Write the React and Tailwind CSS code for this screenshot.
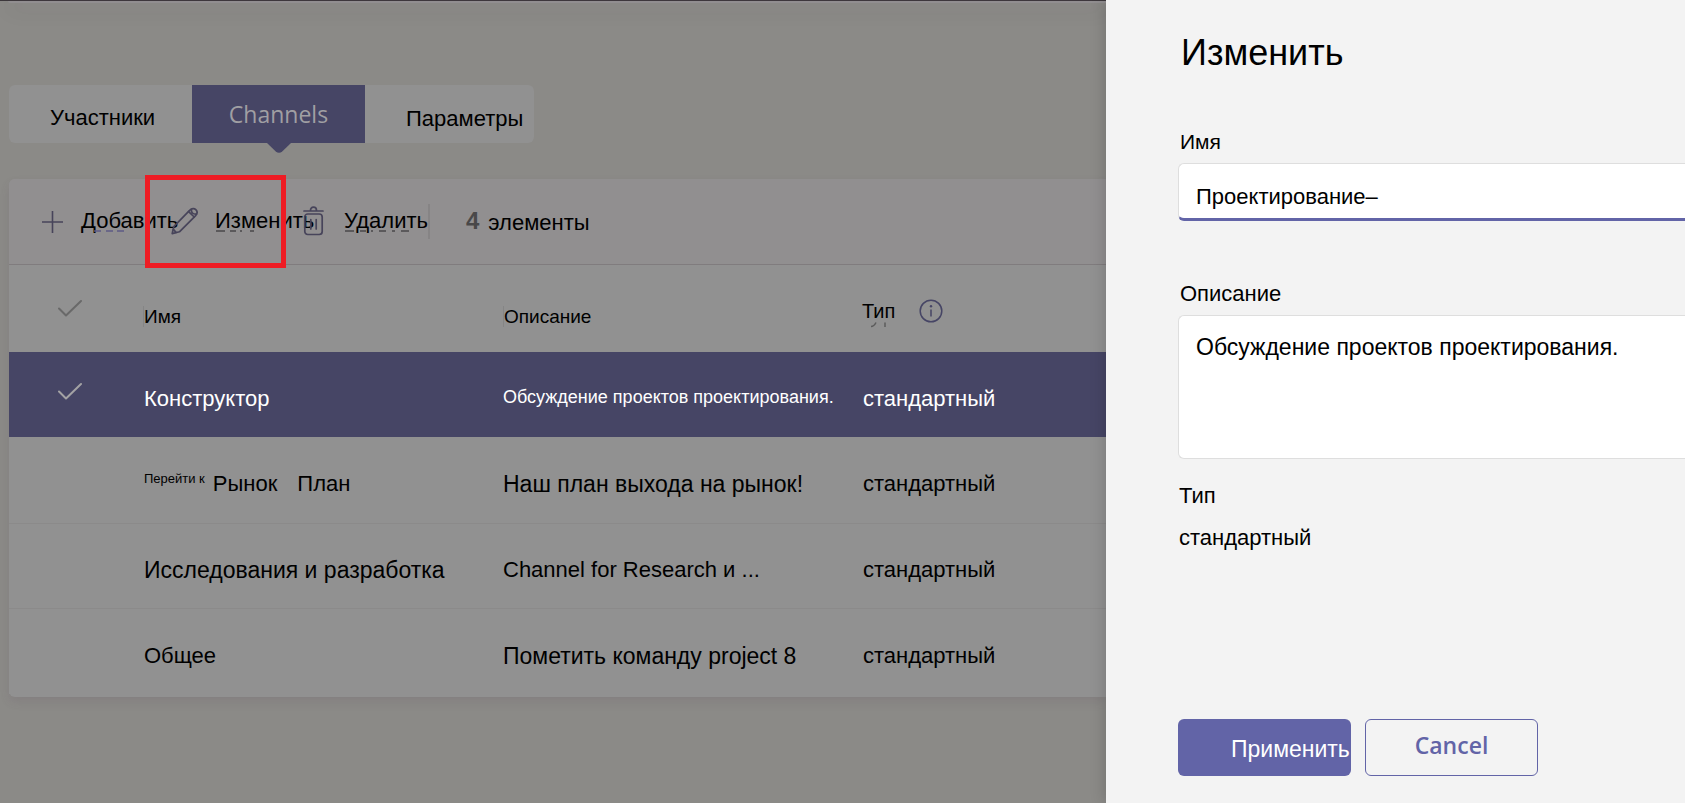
import React, { useState } from "react";

const channels = [
  {
    id: "design",
    name: "Конструктор",
    description: "Обсуждение проектов проектирования.",
    type: "стандартный",
    rowClass: "h-[85px] bg-[#464565] text-white",
    nameClass: "text-[22px]",
    descriptionClass: "pt-1 text-[18px]",
  },
  {
    id: "market",
    prefix: "Перейти к",
    name: "Рынок",
    suffix: "План",
    description: "Наш план выхода на рынок!",
    type: "стандартный",
    rowClass: "h-[87px]",
    nameClass: "text-[22px]",
    descriptionClass: "pt-2 text-[23px]",
  },
  {
    id: "research",
    name: "Исследования и разработка",
    description: "Channel for Research и ...",
    type: "стандартный",
    rowClass: "h-[85px]",
    nameClass: "text-[23px]",
    descriptionClass: "pt-2 text-[22px]",
  },
  {
    id: "general",
    name: "Общее",
    description: "Пометить команду project 8",
    type: "стандартный",
    rowClass: "h-[85px]",
    nameClass: "text-[22px]",
    descriptionClass: "pt-2 text-[23px]",
  },
];

const PlusIcon = () => (
  <svg width="22" height="24" viewBox="0 0 22 24" fill="none" stroke="#47445a" strokeWidth="1.6">
    <path d="M0 13H21M10.5 2V24" />
  </svg>
);

const PencilIcon = () => (
  <svg width="27" height="28" viewBox="0 0 27 28" fill="none" stroke="#47445a" strokeWidth="1.7" strokeLinejoin="round" strokeLinecap="round">
    <path d="M1.2 26.6L2.8 19.6L18.6 3.4C20.6 1.2 23.2 1 24.8 2.6C26.4 4.2 26.3 6.8 24.4 8.8L8.4 24.8Z" />
    <path d="M17.6 4.6L23.2 10M20.4 2.2C20 5.4 21.8 7.4 25.4 7.2M2.4 22.4L5 25.4" />
  </svg>
);

const TrashIcon = () => (
  <svg width="21" height="30" viewBox="0 0 21 30" fill="none" stroke="#47445a" strokeWidth="1.7" strokeLinecap="round">
    <path d="M1 5H20M7.5 4.5C7.5 2.4 8.6 1.2 10.5 1.2S13.5 2.4 13.5 4.5" />
    <rect x="1.8" y="8" width="17.4" height="20.5" rx="3" />
    <path d="M7.8 13.5V23M13.2 13.5V23" />
  </svg>
);

const CheckIcon = ({ color }) => (
  <svg width="25" height="18" viewBox="0 0 25 18" fill="none" stroke={color} strokeWidth="2" strokeLinecap="round" strokeLinejoin="round">
    <path d="M1 9.5L8 16.5L23 2" />
  </svg>
);

const InfoIcon = () => (
  <svg width="24" height="24" viewBox="0 0 24 24" fill="none" stroke="#464565" strokeWidth="1.5">
    <circle cx="12" cy="12" r="10.8" />
    <path d="M12 10.5V17.5" />
    <circle cx="12" cy="7.2" r="1.2" fill="#464565" stroke="none" />
  </svg>
);

const Tabs = () => (
  <nav className="ml-[9px] flex h-[58px] w-[525px] rounded-md bg-[#919191] text-[22px] text-black">
    <button type="button" className="w-[183px] pt-[6px] pl-[41px] text-left">
      Участники
    </button>
    <button
      type="button"
      className="relative w-[173px] bg-[#464565] text-center font-['Open_Sans',sans-serif] text-[23px] text-[#a09fa3]"
    >
      Channels
      <svg className="absolute top-full left-[75px]" width="24" height="10" viewBox="0 0 24 10" fill="#464565">
        <path d="M0 0H24L15.2 8.4C13.2 10.2 10.8 10.2 8.8 8.4Z" />
      </svg>
    </button>
    <button type="button" className="flex-1 pt-2 pl-[41px] text-left">
      Параметры
    </button>
  </nav>
);

const Toolbar = () => (
  <div className="relative flex h-[86px] items-center rounded-tl-md border-b border-[#807c7e] bg-[#918f90] pl-[33px] text-[22px] whitespace-nowrap">
    <button type="button" className="relative flex w-[129px] shrink-0 items-center pb-0.5 text-left">
      <span className="w-[39px] shrink-0">
        <PlusIcon />
      </span>
      Добавить
      <svg className="absolute bottom-[6px] left-[52px]" width="32" height="3" stroke="#5d5b85" strokeWidth="1.5">
        <path d="M0 1H7M12 1H19M23 1H30" />
      </svg>
    </button>
    <button type="button" className="relative flex w-[132px] shrink-0 items-center pb-0.5 text-left">
      <span className="w-11 shrink-0">
        <PencilIcon />
      </span>
      Изменить
      <svg className="absolute bottom-[6px] left-[45px]" width="40" height="3" stroke="#4a484a" strokeWidth="1.5">
        <path d="M0 1H9M14 1H20M24 1H26M34 1H38" />
      </svg>
    </button>
    <button type="button" className="relative flex shrink-0 items-center border-r-2 border-[#868485] pb-0.5 text-left">
      <span className="w-[41px] shrink-0">
        <TrashIcon />
      </span>
      Удалить
      <svg className="absolute bottom-[6px] left-[42px]" width="72" height="3" stroke="#4a484a" strokeWidth="1.5">
        <path d="M0 1H9M15 1H21M26 1H28M34 1H41M47 1H50M56 1H64" />
      </svg>
    </button>
    <p className="flex items-center gap-[9px] pl-9">
      <b className="pb-0.5 text-2xl leading-7 text-[#494849]">4</b>
      <span className="pt-0.5">элементы</span>
    </p>
    <div className="pointer-events-none absolute -top-1 left-[136px] z-10 h-[93px] w-[141px] border-[5px] border-[#ee1c24]" />
  </div>
);

const ChannelsTable = () => (
  <table className="w-full table-fixed border-separate border-spacing-0 bg-[#919191] text-left whitespace-nowrap">
    <colgroup>
      <col className="w-[134px]" />
      <col className="w-[360px]" />
      <col className="w-[359px]" />
      <col />
    </colgroup>
    <thead>
      <tr className="h-[87px] text-[19px]">
        <td className="pb-0.5 pl-[49px]">
          <CheckIcon color="#696969" />
        </td>
        <th className="pt-[18px] font-normal">
          <span className="border-l border-[#858585] leading-5">Имя</span>
        </th>
        <th className="pt-[18px] font-normal">
          <span className="border-l border-[#858585] leading-5">Описание</span>
        </th>
        <th className="font-normal">
          <div className="flex items-center gap-6 pt-1">
            <span className="relative text-[20px]">
              Тип
              <svg className="absolute -bottom-0.5 left-[9px]" width="16" height="6" fill="none" stroke="#5c5c5c" strokeWidth="1.5">
                <path d="M0 4.5C2.5 4.5 3.5 3.5 5 0.5M14 0.5V5" />
              </svg>
            </span>
            <InfoIcon />
          </div>
        </th>
      </tr>
    </thead>
    <tbody>
      {channels.map((channel, index) => (
        <tr
          key={channel.id}
          className={`${channel.rowClass} ${
            index === 0 ? "" : "[&>td]:border-b [&>td]:border-[#8b8a8a] last:[&>td]:border-b-0"
          }`}
        >
          <td className="pb-2 pl-[49px]">{index === 0 && <CheckIcon color="#a3a2a4" />}</td>
          <td className="pt-2 pl-px">
            <div className={`flex items-start leading-7 ${channel.nameClass}`}>
              {channel.prefix && <span className="mr-2 text-[13px] leading-[18px]">{channel.prefix}</span>}
              <span>{channel.name}</span>
              {channel.suffix && <span className="ml-5">{channel.suffix}</span>}
            </div>
          </td>
          <td className={`leading-7 ${channel.descriptionClass}`}>{channel.description}</td>
          <td className="pt-2 pl-px text-[22px] leading-7">{channel.type}</td>
        </tr>
      ))}
    </tbody>
  </table>
);

const EditPanel = () => {
  const [name, setName] = useState("Проектирование–");
  const [description, setDescription] = useState("Обсуждение проектов проектирования.");

  return (
    <aside className="relative z-20 w-[579px] shrink-0 bg-[#f3f3f3] pt-[33px] pl-[72px] text-[22px] leading-7 shadow-[-1px_0_14px_rgba(0,0,0,0.18)] [clip-path:inset(0_0_0_-24px)]">
      <h2 className="pl-[3px] text-4xl">Изменить</h2>

      <form className="flex flex-col" onSubmit={(e) => e.preventDefault()}>
        <label htmlFor="channel-name" className="mt-[55px] pl-0.5 text-[21px]">
          Имя
        </label>
        <input
          id="channel-name"
          type="text"
          value={name}
          onChange={(e) => setName(e.target.value)}
          className="mt-[7px] h-[58px] rounded-l-md border border-r-0 border-b-3 border-[#dedede] border-b-[#6264a7] bg-white pt-3 pl-[17px] outline-none"
        />

        <label htmlFor="channel-description" className="mt-[59px] pl-0.5">
          Описание
        </label>
        <textarea
          id="channel-description"
          value={description}
          onChange={(e) => setDescription(e.target.value)}
          className="mt-[7px] h-[144px] resize-none rounded-l-md border border-r-0 border-[#dedede] bg-white pt-[17px] pl-[17px] text-[23px] outline-none"
        />

        <p className="mt-[23px] pl-px">Тип</p>
        <p className="mt-[14px] pl-px">стандартный</p>

        <div className="mt-[167px] flex gap-[14px]">
          <button
            type="submit"
            className="h-[57px] w-[173px] rounded-md bg-[#6264a7] pt-0.5 pl-[53px] text-left text-[23px] whitespace-nowrap text-white"
          >
            Применить
          </button>
          <button
            type="button"
            className="h-[57px] w-[173px] rounded-md border border-[#6264a7] pb-[6px] font-['Open_Sans',sans-serif] text-[23px] font-semibold text-[#6264a7]"
          >
            Cancel
          </button>
        </div>
      </form>
    </aside>
  );
};

const App = () => {
  return (
    <div className="flex min-h-screen overflow-hidden bg-white pr-[3px] pb-px font-['Liberation_Sans',Arial,sans-serif] text-black">
      <main className="min-w-0 flex-1 bg-[#8b8a87]">
        <div className="h-px bg-[#3d383c]" />
        <div className="ml-2 h-0.5 rounded-bl-md bg-[#918e90] shadow-[0_4px_20px_rgba(60,50,60,0.25)]" />
        <div className="pt-[82px]">
          <Tabs />
        </div>
        <section className="mt-9 ml-[9px] rounded-l-md bg-[#919191] pb-[3px] shadow-[0_5px_10px_rgba(90,70,90,0.14)]">
          <Toolbar />
          <ChannelsTable />
        </section>
      </main>
      <EditPanel />
    </div>
  );
};

export default App;
